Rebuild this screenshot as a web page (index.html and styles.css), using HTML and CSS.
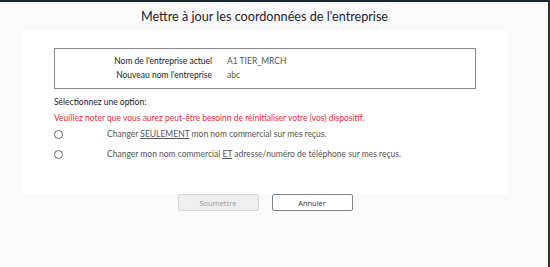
FILE: index.html
```html
<!DOCTYPE html>
<html lang="fr">
<head>
<meta charset="utf-8">
<title>Mettre à jour</title>
<link rel="stylesheet" href="styles.css">
</head>
<body>
<div class="page">
  <div class="container">
    <h1 class="title">Mettre à jour les coordonnées de l'entreprise</h1>
    <div class="card">
      <div class="info-box">
        <div class="info-row">
          <span class="info-label">Nom de l'entreprise actuel</span>
          <span class="info-value">A1 TIER_MRCH</span>
        </div>
        <div class="info-row">
          <span class="info-label">Nouveau nom l'entreprise</span>
          <span class="info-value">abc</span>
        </div>
      </div>
      <div class="select-label">Sélectionnez une option:</div>
      <div class="warning">Veuillez noter que vous aurez peut-être besoinn de réinitialiser votre (vos) dispositif.</div>
      <label class="option">
        <span class="radio"></span>
        <span class="option-text">Changer <u>SEULEMENT</u> mon nom commercial sur mes reçus.</span>
      </label>
      <label class="option">
        <span class="radio"></span>
        <span class="option-text">Changer mon nom commercial <u>ET</u> adresse/numéro de téléphone sur mes reçus.</span>
      </label>
    </div>
    <div class="actions">
      <button class="btn btn-disabled" type="button">Soumettre</button>
      <button class="btn btn-cancel" type="button">Annuler</button>
    </div>
  </div>
</div>
</body>
</html>
```
FILE: styles.css
```css
html, body {
  margin: 0;
  padding: 0;
}
body {
  background: #fafafa;
  font-family: "Lato", "Open Sans", sans-serif;
  color: #333;
}
.page {
  height: 267px;
  box-sizing: border-box;
  border-top: 2px solid #1d2634;
  border-right: 2px solid #2b3038;
}
.container {
  margin-left: 21px;
  width: 487px;
}
.title {
  margin: 0;
  height: 29px;
  display: flex;
  align-items: center;
  justify-content: center;
  font-size: 12.65px;
  font-weight: 400;
  color: #1a2230;
}
.card {
  background: #fff;
  height: 163px;
  box-sizing: border-box;
  padding: 17px 32px 0 33px;
}
.info-box {
  border: 1px solid #858b91;
  height: 41px;
  box-sizing: border-box;
  padding-top: 5px;
}
.info-row {
  display: flex;
  height: 14px;
  align-items: center;
  font-size: 8.5px;
}
.info-label {
  width: 157px;
  text-align: right;
  color: #222;
}
.info-value {
  margin-left: 15px;
  color: #555;
}
.select-label {
  margin-top: 7px;
  font-size: 8.5px;
  line-height: 12px;
  color: #222;
}
.warning {
  margin-top: 4px;
  font-size: 8.5px;
  line-height: 12px;
  color: #ee2d3a;
}
.option {
  display: flex;
  align-items: center;
  height: 20px;
  font-size: 8.5px;
  color: #555;
}
.radio {
  width: 7px;
  height: 7px;
  border: 1px solid #666;
  border-radius: 50%;
}
.option-text {
  margin-left: 44px;
}
.option-text u {
  text-underline-offset: 1px;
}
.actions {
  display: flex;
  justify-content: center;
  gap: 13px;
  padding-left: 1px;
}
.btn {
  width: 81px;
  height: 17px;
  font-family: "Open Sans", sans-serif;
  font-size: 7.5px;
  padding: 0;
  border-radius: 2px;
}
.btn-disabled {
  background: #efefef;
  border: 1px solid #d8d8d8;
  color: #999;
}
.btn-cancel {
  background: #fff;
  border: 1px solid #7d858c;
  color: #333;
}
```
